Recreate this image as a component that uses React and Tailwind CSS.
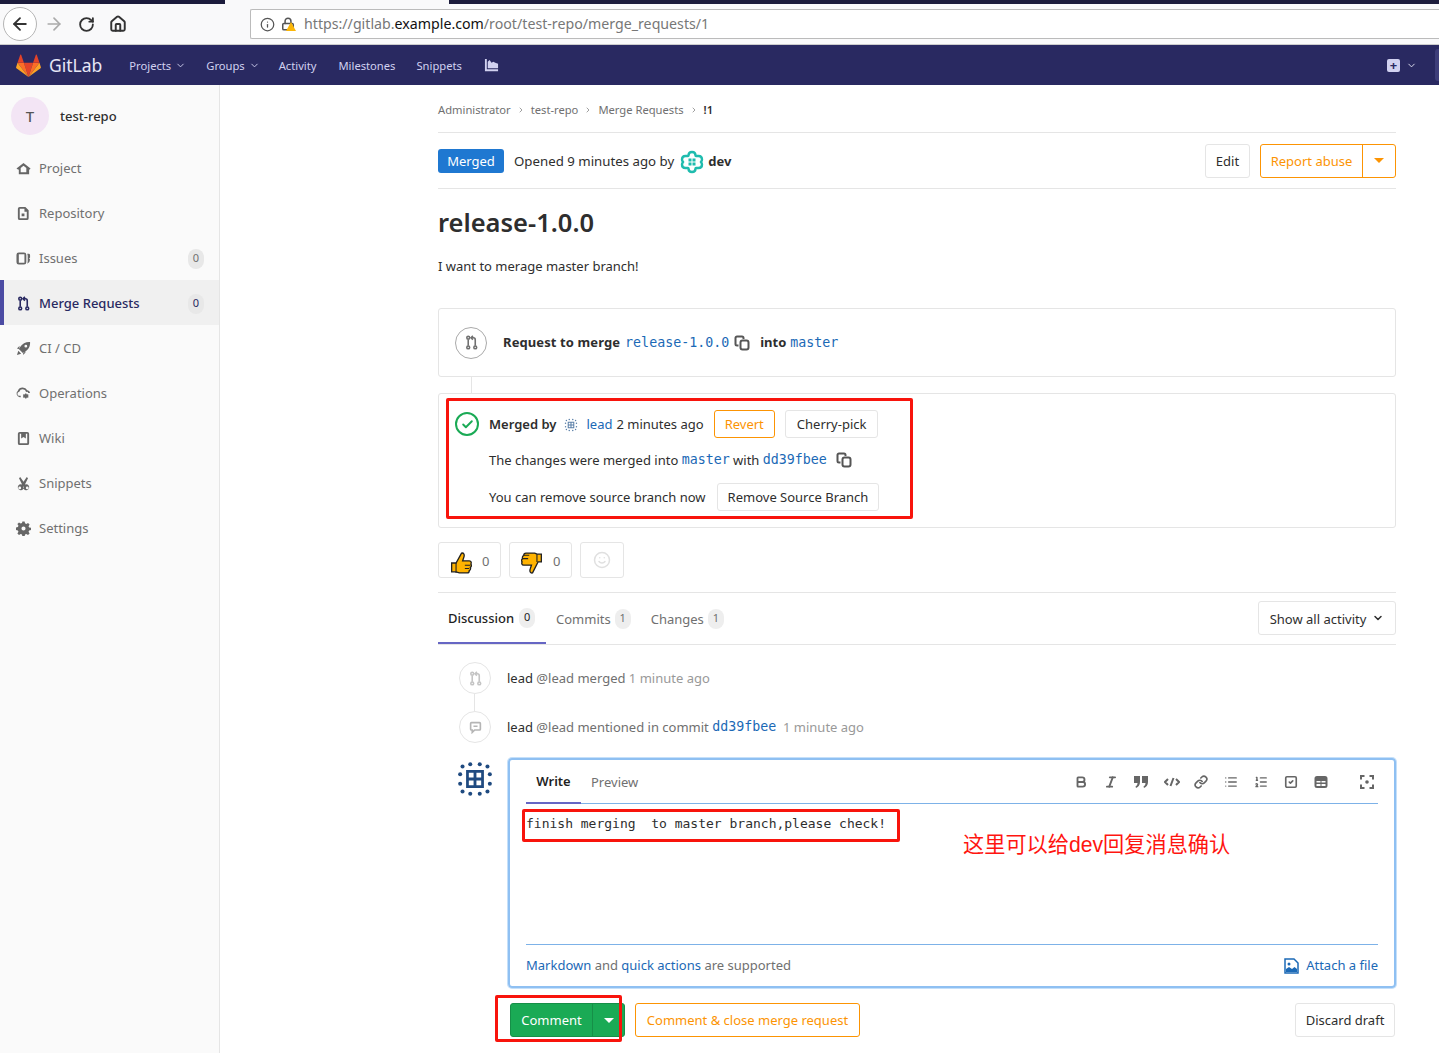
import React from "react";
import { ArrowLeft, ArrowRight, RotateCw, Home, Info, Lock, ChevronDown, ChevronRight, Bold, Italic, Link, List, ListOrdered, SquareCheck, Smile, Check } from "lucide-react";

const font = "font-['Noto_Sans','Liberation_Sans',sans-serif]";
const mono = "font-['DejaVu_Sans_Mono','Liberation_Mono',monospace]";
// Noto sits a pixel higher than the reference face in centered rows
const nudge = "pt-[2px]";

const MergeIcon = ({ className }) => (
  <svg viewBox="0 0 16 16" fill="none" stroke="currentColor" strokeWidth="1.7" className={className}>
    <circle cx="4.5" cy="2.800" r="1.500" />
    <circle cx="4.500" cy="13.200" r="1.500" />
    <circle cx="12" cy="13.200" r="1.500" />
    <path d="M4.500 4.500v7M12 11.500V5a2 2 0 0 0-2-2H8" />
    <path d="M9.500 1 7.500 3l2 2" />
  </svg>
);

const CopyIcon = () => (
  <svg viewBox="0 0 16 16" className="w-[16px] h-[16px] text-[#555]" fill="none" stroke="currentColor" strokeWidth="2">
    <path d="M4.500 10.500H3a1.500 1.500 0 0 1-1.500-1.500V3A1.500 1.500 0 0 1 3 1.500h5A1.500 1.500 0 0 1 9.500 3v1" />
    <rect x="6.500" y="5.500" width="8" height="9" rx="2" />
  </svg>
);

const Tanuki = () => (
  <svg viewBox="0 0 36 33" className="w-[25px] h-[23px]">
    <path fill="#e24329" d="M18 33 24.600 12.700H11.400z" />
    <path fill="#fc6d26" d="M18 33 11.400 12.700H2.200z" />
    <path fill="#fca326" d="M2.200 12.700.2 19a1.400 1.400 0 0 0 .5 1.500L18 33z" />
    <path fill="#e24329" d="M2.200 12.700h9.200L7.400 1a.7.7 0 0 0-1.300 0z" />
    <path fill="#fc6d26" d="M18 33l6.600-20.300h9.200z" />
    <path fill="#fca326" d="M33.800 12.700l2 6.300a1.400 1.400 0 0 1-.5 1.500L18 33z" />
    <path fill="#e24329" d="M33.800 12.700h-9.200L28.600 1a.7.7 0 0 1 1.300 0z" />
  </svg>
);

// identicon used for the lead account
const LeadAvatar = ({ size, color = "#1f4a80" }) => {
  const dots = [[12, 3.500], [20, 3.500], [12, 28.500], [20, 28.500], [3.500, 12], [3.500, 20], [28.500, 12], [28.500, 20], [5.500, 5.500], [26.500, 5.500], [5.500, 26.500], [26.500, 26.500]];
  return (
    <svg viewBox="0 0 32 32" style={{ width: size, height: size }}>
      {dots.map(([x, y]) => (
        <circle key={`${x}-${y}`} cx={x} cy={y} r="1.700" fill={color} />
      ))}
      <path fill={color} fillRule="evenodd" d="M8.500 8.500h15v15h-15zM10.800 10.800v4h4v-4zM17.200 10.800v4h4v-4zM10.800 17.200v4h4v-4zM17.200 17.200v4h4v-4z" />
    </svg>
  );
};

const DevAvatar = () => (
  <svg viewBox="0 0 24 24" className="w-[24px] h-[24px]" fill="none" stroke="#1fbcae" strokeWidth="2.400">
    <path d="M12 2c2 0 3.500 1.500 3.500 3.500 0 .3.200.5.500.5h2.500C20.500 6 22 7.500 22 9.500c0 1-.5 1.800-1 2.500.5.700 1 1.500 1 2.500 0 2-1.500 3.500-3.500 3.500H16c-.3 0-.5.200-.5.500 0 2-1.500 3.500-3.500 3.500s-3.500-1.500-3.500-3.500c0-.3-.2-.5-.5-.5H5.500C3.500 18 2 16.500 2 14.500c0-1 .5-1.800 1-2.500-.5-.7-1-1.500-1-2.500C2 7.500 3.500 6 5.500 6H8c.3 0 .5-.2.500-.5C8.500 3.500 10 2 12 2z" />
    <g fill="#1fbcae" stroke="none">
      <rect x="8.500" y="8.500" width="3" height="3" />
      <rect x="12.500" y="8.500" width="3" height="3" />
      <rect x="8.500" y="12.500" width="3" height="3" />
      <rect x="12.500" y="12.500" width="3" height="3" />
    </g>
  </svg>
);

const navItems = [
  ["Project", "M0.500 8 8 2l7.500 6-1 1.200-.5-.4V14H3V8.800l-.5.4zM5 7.500V12h6V7.500L8 5z"],
  ["Repository", "M4 1h6l3.500 3.500V13a2 2 0 0 1-2 2h-7.500a2 2 0 0 1-2-2V3a2 2 0 0 1 2-2zM4 3v10h7.500V6H9V3zM6 8h3v3H6z"],
  ["Issues", "M3 1.500h5.500a2.500 2.500 0 0 1 2.500 2.500v8a2.500 2.500 0 0 1-2.500 2.500H3A2.500 2.500 0 0 1 .5 12V4A2.500 2.500 0 0 1 3 1.500zM3 3.500V12.500h6V3.500zM12 3h1.500a1.500 1.500 0 0 1 1.500 1.500V7l-1 1 1 1a5 5 0 0 1-3 4.500 9 9 0 0 0 .5-3.500V5z"],
  ["Merge Requests", null],
  ["CI / CD", "M15 1c.3 4.500-1.500 8-6 11l-1.500 1-4.500-4.500 1-1.500c3-4.500 6.500-6.300 11-6zM4 5 1 8l2 .5zM8 12l-.5 3 3-3zM2.500 10.500l3 3L1 15zM10.500 4a1.500 1.500 0 1 0 0 3 1.500 1.500 0 0 0 0-3z"],
  ["Operations", "M7 1.500a5.500 5.500 0 0 1 5 3A3.500 3.500 0 0 1 15 7.500h-2a1.500 1.500 0 0 0-2.200-1.100A3.800 3.800 0 0 0 3.500 6 2.200 2.200 0 0 0 4 10.500h1V12H4A4 4 0 0 1 2 5 5.500 5.500 0 0 1 7 1.500zM11 8l.500 1 1.200-.3.800.9-.7 1 .7 1-.8.9-1.200-.3-.5 1h-1.200l-.5-1-1.200.3-.800-.9.700-1-.700-1 .800-.9 1.200.3.500-1z"],
  ["Wiki", "M4 1h8a2 2 0 0 1 2 2v10a2 2 0 0 1-2 2H4a2 2 0 0 1-2-2V3a2 2 0 0 1 2-2zM4 3v10h8V3h-1.500v5L8 6.500 5.500 8V3z"],
  ["Snippets", "M4.500 1 8 6.200 11.500 1l1.300 1.500-3.300 6.600a3.200 3.200 0 1 1-1.500 1.500 3.200 3.200 0 1 1-1.500-1.500L3.200 2.500zM4 11.200a1.500 1.500 0 1 0 0 3 1.500 1.500 0 0 0 0-3zM12 11.200a1.500 1.500 0 1 0 0 3 1.500 1.500 0 0 0 0-3z"],
  ["Settings", "M6.800.5h2.400l.4 2 1.400.6 1.800-1.100 1.700 1.700-1.100 1.800.6 1.400 2 .4v2.400l-2 .4-.6 1.400 1.100 1.800-1.700 1.700-1.800-1.100-1.400.6-.4 2H6.800l-.4-2-1.400-.6-1.800 1.100-1.700-1.700 1.100-1.800-.6-1.400-2-.4V6.800l2-.4.6-1.400L1.500 3.200l1.700-1.700L5 2.600l1.400-.6zM8 5.800a2.200 2.200 0 1 0 0 4.400 2.200 2.200 0 0 0 0-4.400z"],
];

const Sidebar = () => (
  <aside className="w-[220px] shrink-0 bg-[#fafafa] border-r border-[#e5e5e5] pt-[11px]">
    <div className="flex items-center pl-[11px] h-[40px] mb-[9px]">
      <div className="w-[38px] h-[38px] rounded-full bg-[#f3e5f5] flex items-center justify-center text-[#555] text-[15px] font-medium mr-[11px]">T</div>
      <span className={`text-[13px] font-medium text-[#2e2e2e] ${nudge}`}>test-repo</span>
    </div>
    {navItems.map(([label, d]) => {
      const active = label === "Merge Requests";
      const count = label === "Issues" || active;
      return (
        <div key={label} className={`h-[45px] flex items-center pr-[15px] ${nudge} ${active ? "bg-[#f0f0f0] border-l-4 border-[#4b4ba3] pl-[12px] text-[#292961] font-medium" : "pl-[16px] text-[#707070]"}`}>
          {d ? (
            <svg viewBox="0 0 16 16" className="w-[15px] h-[15px] mr-[8px] text-[#666]" fill="currentColor" fillRule="evenodd"><path d={d} /></svg>
          ) : (
            <MergeIcon className="w-[15px] h-[15px] mr-[8px] text-[#292961]" />
          )}
          <span className="text-[13px] flex-1">{label}</span>
          {count && (
            <span className={`w-[16px] h-[20px] rounded-full bg-[#e8e8e8] text-[11px] flex items-center justify-center ${active ? "font-normal text-[#292961]" : "text-[#707070]"}`}>0</span>
          )}
        </div>
      );
    })}
  </aside>
);

const Btn = ({ children, className = "" }) => (
  <button className={`h-[28px] px-[11px] pt-[2px] rounded-[3px] border border-[#e5e5e5] bg-white text-[13px] text-[#2e2e2e] whitespace-nowrap ${className}`}>{children}</button>
);

const Caret = ({ className }) => <span className={`w-0 h-0 border-x-[5px] border-x-transparent border-t-[5px] inline-block ${className}`} />;

const ThumbUp = () => (
  <svg viewBox="1 1 19 20" className="w-[22px] h-[22px] mt-[6px]">
    <path fill="#ffb300" stroke="#222" strokeWidth="1.200" d="M2 11h4l5-9c2-.5 3 1.500 2 4l-1 3h6c2 0 2 2 1.500 3 .8 1 .5 2.500-.5 3 .5 1 0 2.500-1 3 0 1.500-1 2-2 2H9l-3-1H2z" />
    <path stroke="#222" strokeWidth="1" fill="none" d="M6 11v9M14 13h5M14 16h4" />
  </svg>
);

const ThumbDown = () => (
  <svg viewBox="2 1 19 20" className="w-[22px] h-[22px] mt-[6px]">
    <path fill="#ffb300" stroke="#222" strokeWidth="1.200" d="M20 10h-3l-5 10c-2 .5-3-1.500-2-4l1-3H4c-2 0-2-2-1.500-3C1.700 9 2 7.500 3 7c-.5-1 0-2.500 1-3 0-1.500 1-2 2-2h8l2 1h4z" />
    <path stroke="#222" strokeWidth="1" fill="none" d="M16 3v7M9 4H4M8 7H3" />
  </svg>
);

const toolbarIcon = "w-[14px] h-[14px] text-[#666]";

const Toolbar = () => (
  <div className="flex items-center text-[#666]">
    <Bold className={`${toolbarIcon} mr-[16px]`} strokeWidth={3.2} />
    <Italic className={`${toolbarIcon} mr-[16px]`} strokeWidth={3.2} />
    <svg viewBox="0 0 14 14" className="w-[14px] h-[14px] mr-[16px]" fill="currentColor">
      <path d="M0 1h6v6c0 3-1.500 5-4 6l-.5-1.500C3 10.800 3.500 9.500 3.500 8H0zM8 1h6v6c0 3-1.500 5-4 6l-.5-1.500C11 10.800 11.500 9.500 11.500 8H8z" />
    </svg>
    <svg viewBox="0 0 16 14" className="w-[16px] h-[14px] mr-[14px]" fill="none" stroke="currentColor" strokeWidth="2">
      <path d="M4 4 1 7l3 3M12 4l3 3-3 3M9.500 3 6.500 11" />
    </svg>
    <Link className={`${toolbarIcon} mr-[16px]`} strokeWidth={2.8} />
    <List className={`${toolbarIcon} mr-[16px]`} strokeWidth={2.400} />
    <ListOrdered className={`${toolbarIcon} mr-[16px]`} strokeWidth={2.400} />
    <SquareCheck className={`${toolbarIcon} mr-[16px]`} strokeWidth={2.800} />
    <svg viewBox="0 0 14 14" className="w-[14px] h-[14px] mr-[32px]" fill="currentColor" fillRule="evenodd">
      <path d="M3 1h8a2.500 2.500 0 0 1 2.500 2.500v7A2.500 2.500 0 0 1 11 13H3a2.500 2.500 0 0 1-2.500-2.500v-7A2.500 2.500 0 0 1 3 1zM2.500 6v1.500h4V6zM7.500 6v1.500h4V6zM2.500 9v2h4V9zM7.500 9v2h4V9z" />
    </svg>
    <svg viewBox="0 0 14 14" className="w-[14px] h-[14px]" fill="none" stroke="currentColor" strokeWidth="2">
      <path d="M1 4.500V1h3.500M9.500 1H13v3.500M13 9.500V13H9.500M4.500 13H1V9.500" />
      <circle cx="7" cy="7" r="1.800" fill="currentColor" stroke="none" />
    </svg>
  </div>
);

const Tab = ({ label, count, active }) => (
  <div className={`h-[51px] flex items-center ${active ? "pl-[10px] pr-[10px] gap-[5px] w-[108px] border-b-2 border-[#6666c4] text-[#1f1f1f] font-medium" : "px-[10px] gap-[4px] text-[#707070]"}`}>
    <span className={`text-[13px] ${nudge}`}>{label}</span>
    <span className={`w-[16px] h-[20px] rounded-full bg-[#eee] text-[11px] font-normal flex items-center justify-center ${active ? "text-[#222]" : "text-[#707070]"}`}>{count}</span>
  </div>
);

const Annotation = ({ className }) => (
  <div className={`absolute border-[3px] border-[#f8140c] rounded-[2px] pointer-events-none ${className}`} />
);

const Content = () => (
  <main className="w-[958px] ml-[218px] relative">
    <div className="h-[48px] pt-[3px] flex items-center gap-[6px] border-b border-[#e5e5e5] text-[11.2px] text-[#707070]">
      <span>Administrator</span>
      <ChevronRight className="w-[8px] h-[8px]" />
      <span>test-repo</span>
      <ChevronRight className="w-[8px] h-[8px]" />
      <span>Merge Requests</span>
      <ChevronRight className="w-[8px] h-[8px]" />
      <span className="text-[#2e2e2e] font-semibold">!1</span>
    </div>
    <div className="h-[56px] flex items-center border-b border-[#e5e5e5] text-[13px] text-[#2e2e2e]">
      <span className={`h-[24px] w-[66px] rounded-[3px] bg-[#1f78d1] text-white flex items-center justify-center mr-[10px] ${nudge}`}>Merged</span>
      <span className={`text-[13.25px] ${nudge}`}>Opened 9 minutes ago by</span>
      <span className="ml-[6px] mr-[4px] mt-[3px]"><DevAvatar /></span>
      <span className={`font-bold ${nudge}`}>dev</span>
      <Btn className="ml-auto !h-[34px] w-[45px] !px-0 mr-[10px]">Edit</Btn>
      <div className="flex h-[34px] border border-[#fc9403] rounded-[3px] text-[#fc9403]">
        <span className={`w-[102px] flex items-center justify-center border-r border-[#fc9403] ${nudge}`}>Report abuse</span>
        <span className="w-[32px] flex items-center justify-center"><Caret className="border-t-[#fc9403]" /></span>
      </div>
    </div>
    <h1 className="text-[25.5px] font-semibold text-[#2e2e2e] leading-[36px] mt-[15px]">release-1.0.0</h1>
    <p className="text-[13px] text-[#2e2e2e] mt-[16px] leading-[20px]">I want to merage master branch!</p>

    <div className="mt-[32px] h-[69px] border border-[#e5e5e5] rounded-[3px] flex items-center pl-[16px] text-[13px] text-[#2e2e2e]">
      <div className="w-[32px] h-[32px] rounded-full border border-[#aaa] flex items-center justify-center text-[#707070] mr-[16px]"><MergeIcon className="w-[15px] h-[15px]" /></div>
      <span className="font-bold mr-[5px] tracking-[0.1px]">Request to merge</span>
      <span className={`${mono} text-[13.3px] text-[#1b69b6] mr-[5px]`}>release-1.0.0</span>
      <CopyIcon />
      <span className="font-bold ml-[10px] mr-[4px]">into</span>
      <span className={`${mono} text-[13.3px] text-[#1b69b6]`}>master</span>
    </div>
    <div className="w-px h-[16px] bg-[#e5e5e5] ml-[33px]" />
    <div className="h-[135px] border border-[#e5e5e5] rounded-[3px] pl-[16px] pt-[16px] text-[13px] text-[#2e2e2e] flex">
      <div className="w-[24px] h-[24px] rounded-full border-2 border-[#1aaa55] flex items-center justify-center mt-[2px] mr-[10px]"><Check className="w-[13px] h-[13px] text-[#1aaa55]" strokeWidth={3.5} /></div>
      <div className="flex flex-col">
        <div className="flex items-center h-[28px]">
          <span className={`font-semibold ${nudge}`}>Merged by</span>
          <span className="ml-[8px] mr-[8px] mt-[2px]"><LeadAvatar size={14} color="#5a7fa8" /></span>
          <span className={`text-[#1b69b6] mr-[4px] ${nudge}`}>lead</span>
          <span className={nudge}>2 minutes ago</span>
          <Btn className="ml-[10px] !px-[10px] !border-[#fc9403] !text-[#fc9403]">Revert</Btn>
          <Btn className="ml-[10px]">Cherry-pick</Btn>
        </div>
        <div className="flex items-center h-[20px] mt-[12px]">
          <span className={nudge}>The changes were merged into&nbsp;</span>
          <span className={`${mono} text-[13.3px] text-[#1b69b6]`}>master</span>
          <span className={nudge}>&nbsp;with&nbsp;</span>
          <span className={`${mono} text-[13.3px] text-[#1b69b6] mr-[9px]`}>dd39fbee</span>
          <CopyIcon />
        </div>
        <div className="flex items-center h-[28px] mt-[13px]">
          <span className={nudge}>You can remove source branch now</span>
          <Btn className="ml-[11px] !px-[10px]">Remove Source Branch</Btn>
        </div>
      </div>
    </div>

    <div className="mt-[14px] flex gap-[8px] h-[36px] text-[13px] text-[#707070]">
      <div className="w-[63px] border border-[#e5e5e5] rounded-[3px] flex items-center pl-[11px] gap-[10px]"><ThumbUp /><span className="pt-[3px]">0</span></div>
      <div className="w-[63px] border border-[#e5e5e5] rounded-[3px] flex items-center pl-[11px] gap-[10px]"><ThumbDown /><span className="pt-[3px]">0</span></div>
      <div className="w-[44px] border border-[#e5e5e5] rounded-[3px] flex items-center justify-center"><Smile className="w-[18px] h-[18px] text-[#e0e0e0]" /></div>
    </div>

    <div className="mt-[14px] h-[53px] border-y border-[#e5e5e5] flex items-start">
      <Tab label="Discussion" count="0" active />
      <Tab label="Commits" count="1" />
      <Tab label="Changes" count="1" />
      <div className="ml-auto mt-[8px] w-[138px] h-[34px] border border-[#e5e5e5] rounded-[3px] flex items-center justify-center gap-[6px] text-[13px] text-[#2e2e2e]">
        <span className="pt-[3px]">Show all activity</span> <ChevronDown className="w-[12px] h-[12px]" strokeWidth={3} />
      </div>
    </div>

    <div className="ml-[21px] mt-[17px] flex items-center h-[32px] text-[13px] text-[#707070]">
      <div className="w-[32px] h-[32px] rounded-full border border-[#e5e5e5] flex items-center justify-center mr-[16px] bg-white"><MergeIcon className="w-[15px] h-[15px] text-[#c4c4c4]" /></div>
      <span className={`text-[#2e2e2e] ${nudge}`}>lead</span>
      <span className={nudge}>&nbsp;@lead merged</span>
      <span className={`text-[#999] ${nudge}`}>&nbsp;1 minute ago</span>
    </div>
    <div className="ml-[36px] w-px h-[17px] bg-[#e5e5e5]" />
    <div className="ml-[21px] flex items-center h-[32px] text-[13px] text-[#707070]">
      <div className="w-[32px] h-[32px] rounded-full border border-[#e5e5e5] flex items-center justify-center mr-[16px] bg-white">
        <svg viewBox="0 0 16 16" className="w-[13px] h-[13px] text-[#b5b5b5]" fill="none" stroke="currentColor" strokeWidth="2"><path d="M3 2h10a1 1 0 0 1 1 1v7a1 1 0 0 1-1 1H7l-3 3v-3H3a1 1 0 0 1-1-1V3a1 1 0 0 1 1-1zM5.500 6.500h5" /></svg>
      </div>
      <span className={`text-[#2e2e2e] ${nudge}`}>lead</span>
      <span className={nudge}>&nbsp;@lead mentioned in commit&nbsp;</span>
      <span className={`${mono} text-[13.3px] text-[#1b69b6]`}>dd39fbee</span>
      <span className={`text-[#999] ${nudge}`}>&nbsp;&nbsp;1 minute ago</span>
    </div>

    <div className="mt-[15px] flex">
      <div className="w-[70px] pl-[18px] pt-[2px] shrink-0"><LeadAvatar size={38} /></div>
      <div className="flex-1 h-[230px] border-2 border-[#8fc0f2] rounded-[4px] px-[16px] flex flex-col shadow-[0_0_0_1px_#c5e0fa]">
        <div className="h-[44px] flex items-center border-b border-[#7db2e8]">
          <div className={`h-[44px] w-[55px] flex items-center justify-center border-b-2 border-[#6666c4] text-[13px] font-semibold text-[#1f1f1f] ${nudge}`}>Write</div>
          <span className={`ml-[10px] text-[13px] text-[#707070] ${nudge}`}>Preview</span>
          <div className="ml-auto pr-[4px]"><Toolbar /></div>
        </div>
        <div className={`flex-1 pt-[12px] ${mono} text-[13px] leading-[16px] text-[#2e2e2e] whitespace-pre`}>{"finish merging  to master branch,please check!"}</div>
        <div className="h-[42px] border-t border-[#7db2e8] flex items-center justify-between text-[13px] text-[#707070]">
          <span><span className="text-[#1b69b6]">Markdown</span> and <span className="text-[#1b69b6]">quick actions</span> are supported</span>
          <span className="flex items-center gap-[7px] text-[#1b69b6]">
            <svg viewBox="0 0 15 16" className="w-[15px] h-[16px]">
              <path d="M1 1h9l4 4v10H1z" fill="#fff" stroke="#1b69b6" strokeWidth="1.500" />
              <path d="M2 14v-3l3-2 3 2 2.500-2 2.500 2v3z" fill="#1b69b6" />
              <circle cx="5" cy="6" r="1.500" fill="#1b69b6" />
            </svg>
            Attach a file
          </span>
        </div>
      </div>
    </div>

    <div className="mt-[15px] flex items-center pl-[72px] pr-px text-[13px]">
      <div className="flex h-[34px] w-[115px] rounded-[3px] bg-[#1aaa55] border border-[#168f48] text-white">
        <span className={`flex-1 flex items-center justify-center border-r border-[#168f48] ${nudge}`}>Comment</span>
        <span className="w-[31px] flex items-center justify-center"><Caret className="border-t-white" /></span>
      </div>
      <button className={`ml-[10px] h-[34px] w-[225px] border border-[#fc9403] rounded-[3px] text-[#fc9403] ${nudge}`}>Comment &amp; close merge request</button>
      <button className={`ml-auto h-[34px] w-[100px] border border-[#e5e5e5] rounded-[3px] text-[#2e2e2e] ${nudge}`}>Discard draft</button>
    </div>

    {/* red annotations drawn over the screenshot */}
    <Annotation className="left-[8px] top-[313px] w-[467px] h-[121px]" />
    <Annotation className="left-[84px] top-[724px] w-[378px] h-[33px]" />
    <Annotation className="left-[57px] top-[910px] w-[127px] h-[47px]" />
    <span className="absolute left-[525px] top-[744px] text-[21.2px] text-[#ff1510] font-['Liberation_Sans','Noto_Sans_CJK_SC',sans-serif] whitespace-nowrap">这里可以给dev回复消息确认</span>
  </main>
);

const BrowserBar = () => (
  <div className="h-[45px] bg-[#f9f9fa] border-b border-[#ccc] flex flex-col">
    <div className="h-[4px] flex">
      <div className="w-[225px] bg-[#1c1c3c]" />
      <div className="w-[224px] bg-[#f9f9fa]" />
      <div className="flex-1 bg-[#1c1c3c]" />
    </div>
    <div className="flex-1 flex items-center pl-[3px]">
      <div className="w-[34px] h-[34px] rounded-full border border-[#b5b5b5] bg-white flex items-center justify-center mr-[7px]"><ArrowLeft className="w-[20px] h-[20px] text-[#333]" strokeWidth={2.200} /></div>
      <ArrowRight className="w-[20px] h-[20px] text-[#aaa] mr-[14px]" />
      <RotateCw className="w-[17px] h-[17px] text-[#333] mr-[14px]" strokeWidth={2.600} />
      <Home className="w-[18px] h-[18px] text-[#333] mr-[123px]" strokeWidth={2.600} />
      <div className="flex-1 h-[30px] bg-white border border-[#bbb] rounded-l-[2px] border-r-0 flex items-center pl-[9px] text-[14.2px]">
        <Info className="w-[15px] h-[15px] text-[#555] mr-[6px]" />
        <span className="relative mr-[9px]">
          <Lock className="w-[14px] h-[14px] text-[#555]" strokeWidth={2.600} />
          <span className="absolute left-[5px] top-[5px] w-0 h-0 border-x-[5px] border-x-transparent border-b-[9px] border-b-[#fbb608]" />
        </span>
        <span className="text-[#777]">https://gitlab.</span>
        <span className="text-[#111]">example.com</span>
        <span className="text-[#777]">/root/test-repo/merge_requests/1</span>
      </div>
    </div>
  </div>
);

const NavBar = () => (
  <nav className="h-[40px] bg-[#292961] flex items-center pl-[16px] pr-[22px] text-[11.2px] text-[#d1d1f0] relative">
    <Tanuki />
    <span className="text-[17.5px] text-[#e6e6f5] ml-[8px] mr-[27px]">GitLab</span>
    <span className={`flex items-center gap-[4px] mr-[20px] ${nudge}`}>Projects <ChevronDown className="w-[11px] h-[11px]" /></span>
    <span className={`flex items-center gap-[4px] mr-[19px] ${nudge}`}>Groups <ChevronDown className="w-[11px] h-[11px]" /></span>
    <span className={`mr-[22px] ${nudge}`}>Activity</span>
    <span className={`mr-[21px] ${nudge}`}>Milestones</span>
    <span className={`mr-[22px] ${nudge}`}>Snippets</span>
    <svg viewBox="0 0 16 16" className="w-[15px] h-[15px]" fill="currentColor" fillRule="evenodd"><path d="M1 1h2v11h12v2H1zM4 11V4l2-2 2 3 2-1 2 1 3 1v5z" /></svg>
    <span className="ml-auto w-[13px] h-[13px] rounded-[2px] bg-[#d1d1f0] flex items-center justify-center text-[#292961] text-[13px] font-bold leading-none mr-[6px]">+</span>
    <ChevronDown className="w-[11px] h-[11px] text-[#e6e6f5]" />
    <div className="absolute right-0 top-[4px] w-[4px] h-[32px] bg-[#3e3e7a] rounded-l-[3px]" />
  </nav>
);

export default function App() {
  return (
    <div className={`${font} w-[1439px] h-[1053px] overflow-hidden bg-white flex flex-col`}>
      <BrowserBar />
      <NavBar />
      <div className="flex flex-1 min-h-0">
        <Sidebar />
        <Content />
      </div>
    </div>
  );
}
